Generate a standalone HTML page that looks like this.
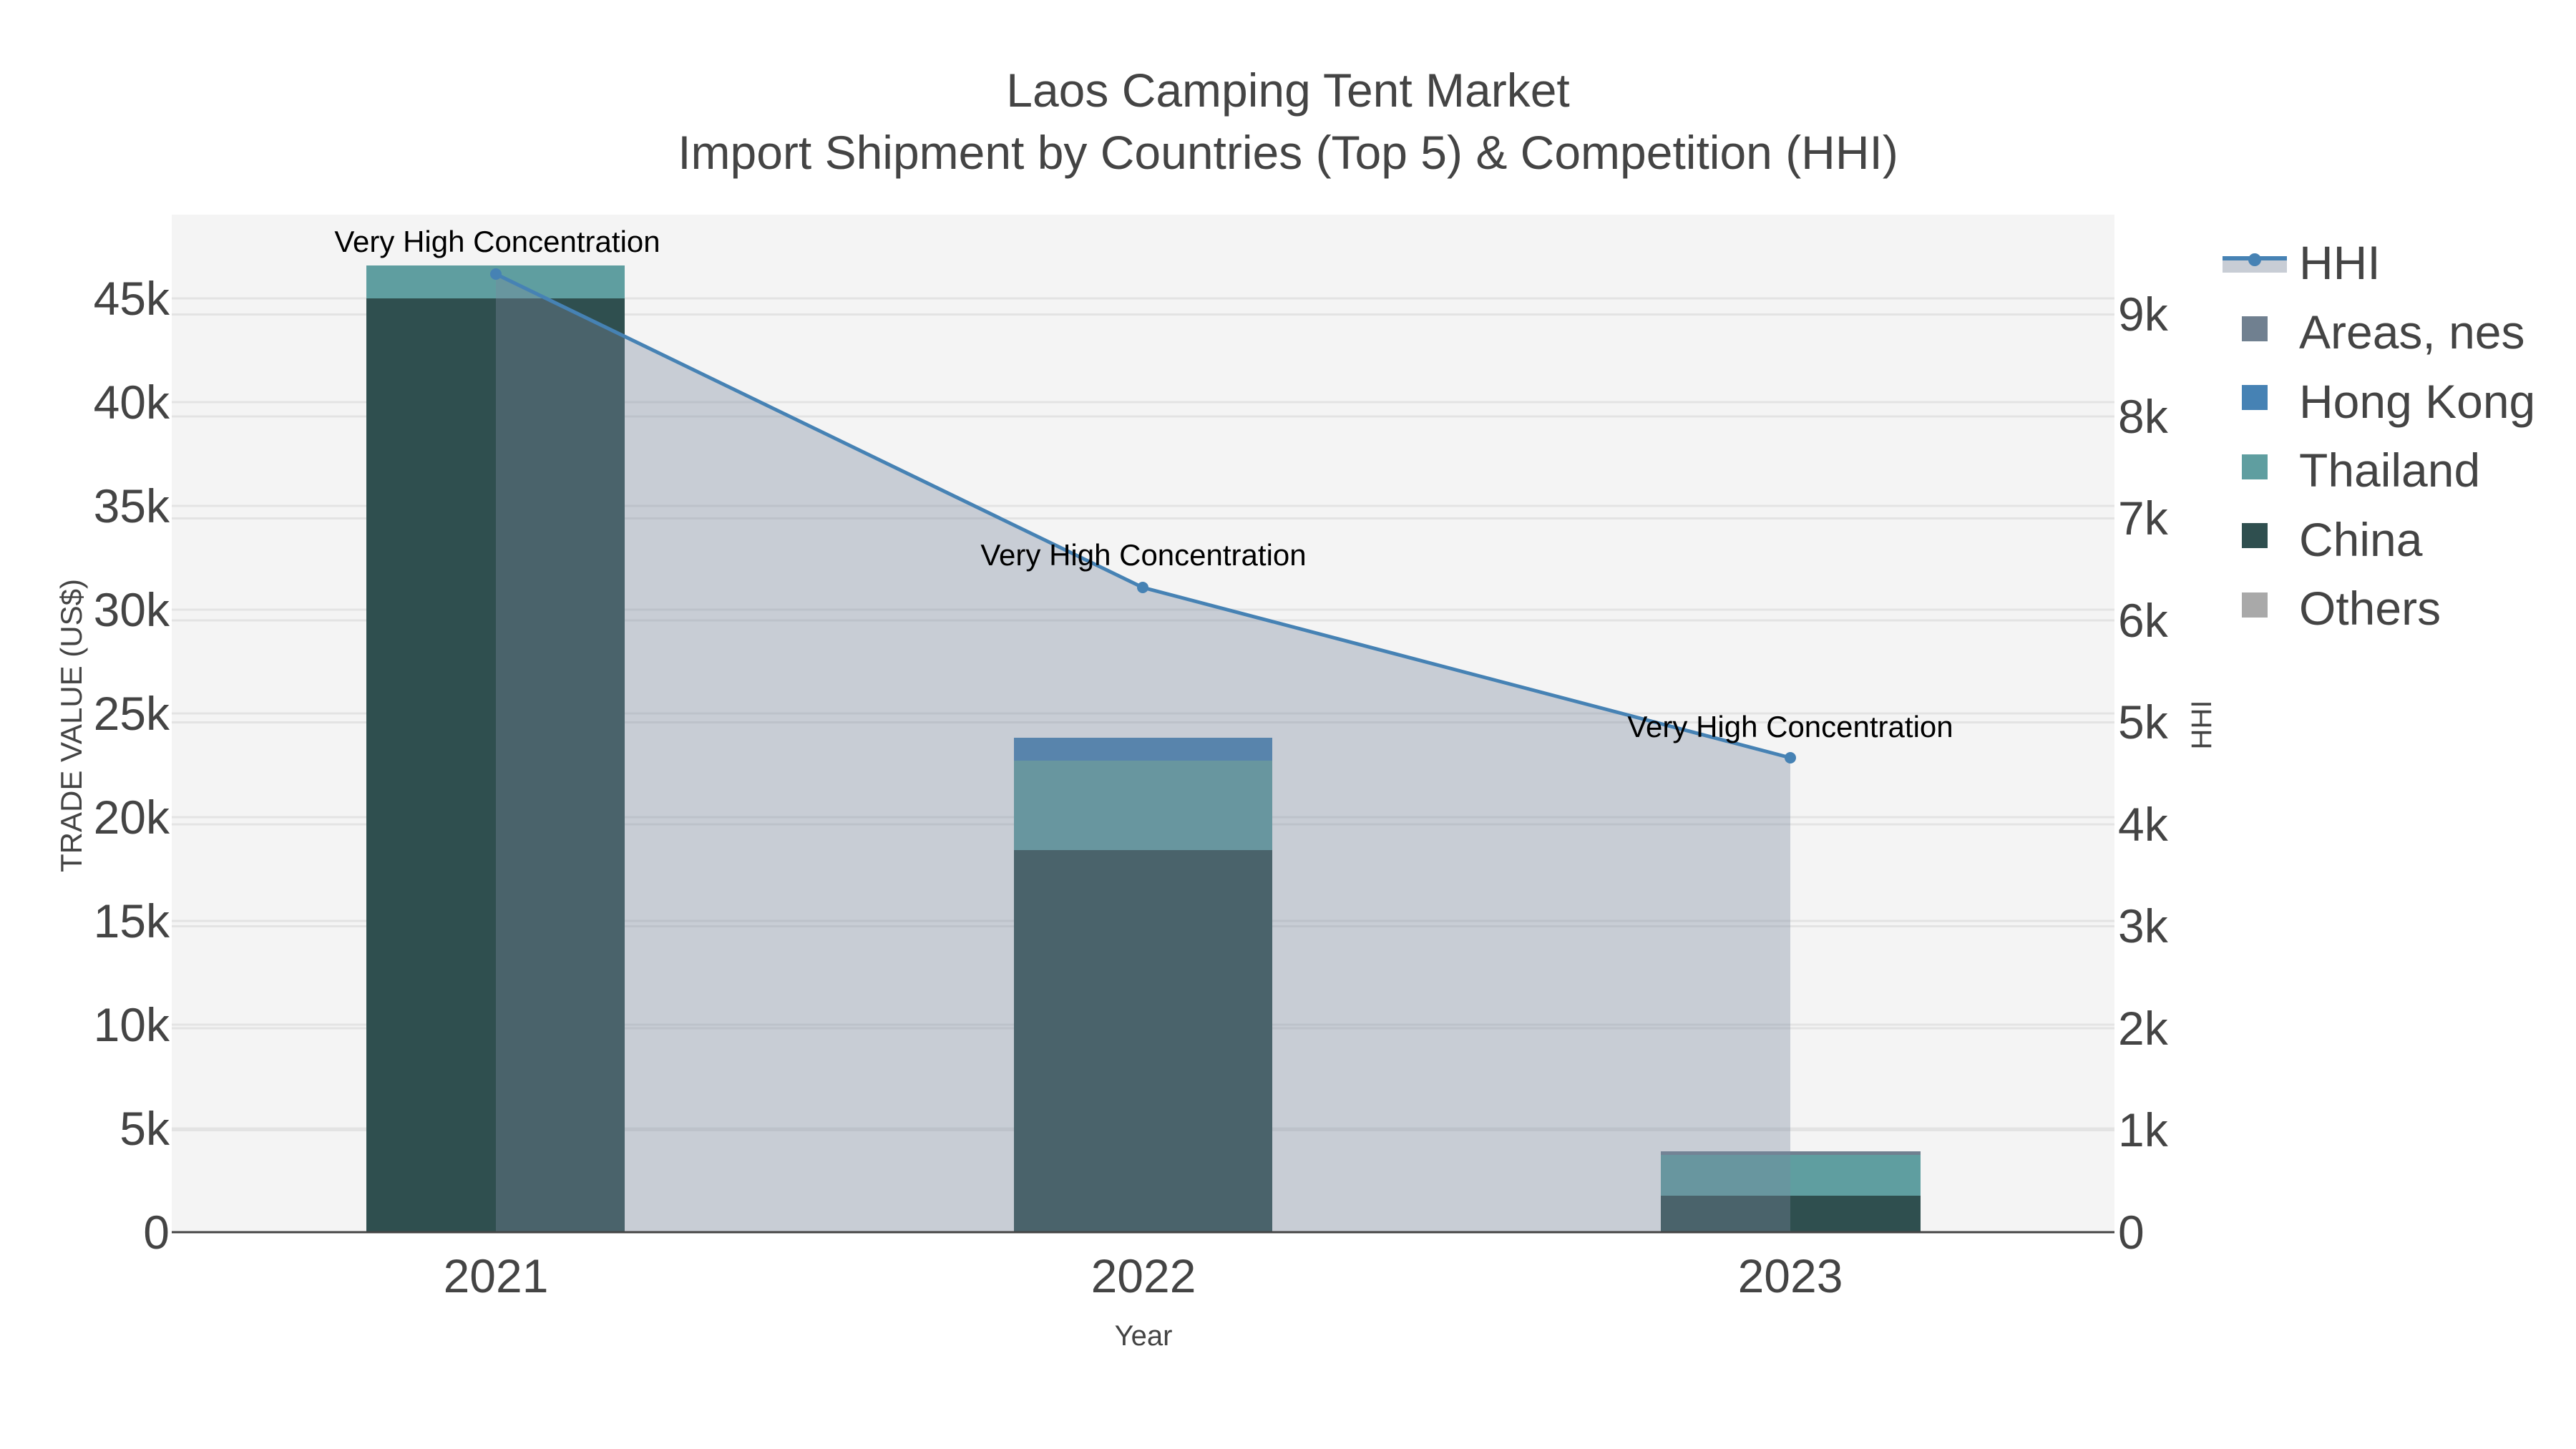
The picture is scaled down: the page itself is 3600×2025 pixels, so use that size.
<!DOCTYPE html>
<html><head><meta charset="utf-8"><style>
html,body{margin:0;padding:0;background:#fff}
svg{display:block}
text{font-family:"Liberation Sans",sans-serif}
</style></head><body>
<svg width="3600" height="2025" viewBox="0 0 3600 2025" xmlns="http://www.w3.org/2000/svg">
<rect x="0" y="0" width="3600" height="2025" fill="#fff"/>
<rect x="240" y="300" width="2715" height="1422" fill="#f4f4f4"/>
<g stroke="#e3e3e3" stroke-width="3">
<line x1="240" x2="2955" y1="1577" y2="1577"/><line x1="240" x2="2955" y1="1432" y2="1432"/>
<line x1="240" x2="2955" y1="1287" y2="1287"/><line x1="240" x2="2955" y1="1142" y2="1142"/>
<line x1="240" x2="2955" y1="997" y2="997"/><line x1="240" x2="2955" y1="852" y2="852"/>
<line x1="240" x2="2955" y1="707" y2="707"/><line x1="240" x2="2955" y1="562" y2="562"/>
<line x1="240" x2="2955" y1="417" y2="417"/>
<line x1="240" x2="2955" y1="1579.5" y2="1579.5"/><line x1="240" x2="2955" y1="1437" y2="1437"/>
<line x1="240" x2="2955" y1="1294.5" y2="1294.5"/><line x1="240" x2="2955" y1="1152" y2="1152"/>
<line x1="240" x2="2955" y1="1009.5" y2="1009.5"/><line x1="240" x2="2955" y1="867" y2="867"/>
<line x1="240" x2="2955" y1="724.5" y2="724.5"/><line x1="240" x2="2955" y1="582" y2="582"/>
<line x1="240" x2="2955" y1="439.5" y2="439.5"/>
</g>
<rect x="512" y="371" width="361" height="46" fill="#5f9ea0"/>
<rect x="512" y="417" width="361" height="1305" fill="#2f4f4f"/>
<rect x="1417" y="1031" width="361" height="32" fill="#4682b4"/>
<rect x="1417" y="1063" width="361" height="125" fill="#5f9ea0"/>
<rect x="1417" y="1188" width="361" height="534" fill="#2f4f4f"/>
<rect x="2321" y="1609" width="363" height="5" fill="#708090"/>
<rect x="2321" y="1614" width="363" height="57" fill="#5f9ea0"/>
<rect x="2321" y="1671" width="363" height="51" fill="#2f4f4f"/>
<polygon points="693,383 1597,821 2502,1059 2502,1722 693,1722" fill="rgb(122,136,158)" fill-opacity="0.36"/>
<line x1="240" x2="2955" y1="1722" y2="1722" stroke="#444" stroke-width="3"/>
<polyline points="693,383 1597,821 2502,1059" fill="none" stroke="#4682b4" stroke-width="5"/>
<circle cx="693" cy="383" r="8" fill="#4682b4"/>
<circle cx="1597" cy="821" r="8" fill="#4682b4"/>
<circle cx="2502" cy="1059" r="8" fill="#4682b4"/>
<g font-size="42" fill="#000" text-anchor="middle">
<text x="695" y="352">Very High Concentration</text>
<text x="1598" y="790">Very High Concentration</text>
<text x="2502" y="1030">Very High Concentration</text>
</g>
<g fill="#444" text-anchor="middle" font-size="66">
<text x="1800" y="149">Laos Camping Tent Market</text>
<text x="1800" y="236">Import Shipment by Countries (Top 5) &amp; Competition (HHI)</text>
</g>
<g fill="#444" font-size="66" text-anchor="end">
<text x="237" y="1745">0</text><text x="237" y="1600">5k</text><text x="237" y="1455">10k</text>
<text x="237" y="1310">15k</text><text x="237" y="1165">20k</text><text x="237" y="1020">25k</text>
<text x="237" y="875">30k</text><text x="237" y="730">35k</text><text x="237" y="585">40k</text>
<text x="237" y="440">45k</text>
</g>
<g fill="#444" font-size="66">
<text x="2960" y="1745">0</text><text x="2960" y="1602">1k</text><text x="2960" y="1460">2k</text>
<text x="2960" y="1317">3k</text><text x="2960" y="1175">4k</text><text x="2960" y="1032">5k</text>
<text x="2960" y="890">6k</text><text x="2960" y="747">7k</text><text x="2960" y="605">8k</text>
<text x="2960" y="462">9k</text>
</g>
<g fill="#444" font-size="66" text-anchor="middle">
<text x="693" y="1806">2021</text><text x="1598" y="1806">2022</text><text x="2502" y="1806">2023</text>
</g>
<text x="1598" y="1880" fill="#444" font-size="40" text-anchor="middle">Year</text>
<text transform="translate(114,1014) rotate(-90)" fill="#444" font-size="42" text-anchor="middle">TRADE VALUE (US$)</text>
<text transform="translate(3090,1013) rotate(-90)" fill="#444" font-size="40" text-anchor="middle">HHI</text>
<rect x="3106" y="364" width="90" height="17" fill="#c8cdd5"/>
<line x1="3106" x2="3196" y1="361" y2="361" stroke="#4682b4" stroke-width="6"/>
<circle cx="3151" cy="363" r="9" fill="#4682b4"/>
<g font-size="66" fill="#444">
<text x="3213" y="390">HHI</text>
<text x="3213" y="487">Areas, nes</text>
<text x="3213" y="584">Hong Kong</text>
<text x="3213" y="680">Thailand</text>
<text x="3213" y="777">China</text>
<text x="3213" y="873">Others</text>
</g>
<rect x="3133" y="442" width="36" height="35" fill="#708090"/>
<rect x="3133" y="538" width="36" height="35" fill="#4682b4"/>
<rect x="3133" y="635" width="36" height="35" fill="#5f9ea0"/>
<rect x="3133" y="731" width="36" height="35" fill="#2f4f4f"/>
<rect x="3133" y="828" width="36" height="35" fill="#a9a9a9"/>
</svg>
</body></html>
